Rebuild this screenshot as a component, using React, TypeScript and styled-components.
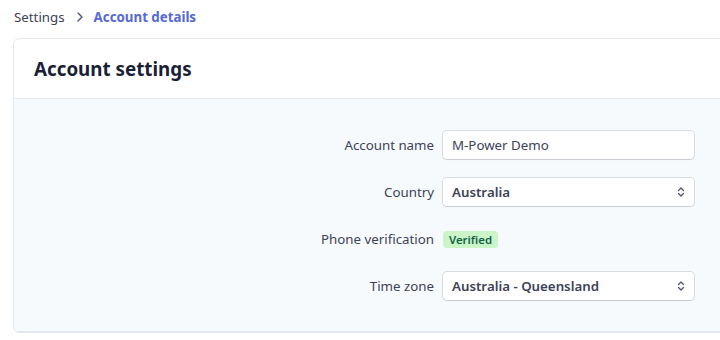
import React from "react";
import styled, { createGlobalStyle } from "styled-components";

const GlobalStyle = createGlobalStyle`
    html, body {
        margin: 0;
        padding: 0;
        background: #ffffff;
        overflow: hidden;
    }
    body {
        font-family: "Noto Sans", "Open Sans", sans-serif;
        color: #3c4257;
    }
`;

type Field = { label: string, kind: "input" | "select" | "badge", value: string };

const fields: Field[] = [
    { label: "Account name", kind: "input", value: "M-Power Demo" },
    { label: "Country", kind: "select", value: "Australia" },
    { label: "Phone verification", kind: "badge", value: "Verified" },
    { label: "Time zone", kind: "select", value: "Australia - Queensland" }
];

const Chevrons = () => (
    <svg width="12" height="12" viewBox="0 0 12 12" fill="none">
        <path d="M3.5 4.5 L6 2 L8.5 4.5" stroke="#4f566b" strokeWidth="1.3" strokeLinecap="round" strokeLinejoin="round" />
        <path d="M3.5 7.5 L6 10 L8.5 7.5" stroke="#4f566b" strokeWidth="1.3" strokeLinecap="round" strokeLinejoin="round" />
    </svg>
);

export default () => {
    return (
        <Page>
            <GlobalStyle />
            <Breadcrumbs>
                <Crumb>Settings</Crumb>
                <Separator>
                    <svg width="8" height="12" viewBox="0 0 8 12" fill="none">
                        <path d="M2 2 L6 6 L2 10" stroke="#4f566b" strokeWidth="1.4" strokeLinecap="round" strokeLinejoin="round" />
                    </svg>
                </Separator>
                <Crumb active>Account details</Crumb>
            </Breadcrumbs>
            <Card>
                <CardHeader>
                    <Title>Account settings</Title>
                </CardHeader>
                <CardBody>
                    <Form>
                        {fields.map(f => (
                            <React.Fragment key={f.label}>
                                <Label>{f.label}</Label>
                                {f.kind === "input" && <TextInput>{f.value}</TextInput>}
                                {f.kind === "select" && (
                                    <Select>
                                        <span>{f.value}</span>
                                        <Chevrons />
                                    </Select>
                                )}
                                {f.kind === "badge" && (
                                    <BadgeCell>
                                        <Badge>{f.value}</Badge>
                                    </BadgeCell>
                                )}
                            </React.Fragment>
                        ))}
                    </Form>
                </CardBody>
            </Card>
        </Page>
    );
};

const Page = styled.div`
    padding: 7px 0 0 14px;
    width: 760px;
`;

const Breadcrumbs = styled.div`
    display: flex;
    align-items: center;
    height: 20px;
    font-size: 13.3px;
    margin-bottom: 11px;
`;

const Crumb = styled.span<{ active?: boolean }>`
    color: ${p => p.active ? "#5469d4" : "#3c4257"};
    font-weight: ${p => p.active ? 700 : 400};
`;

const Separator = styled.span`
    display: flex;
    align-items: center;
    margin: 0 10px 0 11px;
`;

const Card = styled.div`
    margin-left: -1px;
    border: 1px solid #e3e8ee;
    border-radius: 6px;
    background: #ffffff;
    overflow: hidden;
`;

const CardHeader = styled.div`
    height: 59px;
    display: flex;
    align-items: center;
    padding-left: 20px;
    border-bottom: 1px solid #e3e8ee;
`;

const Title = styled.h1`
    margin: 0;
    font-size: 18.8px;
    font-weight: 700;
    color: #1a1f36;
`;

const CardBody = styled.div`
    background: #f7fafc;
    padding: 32px 0 31px;
    border-bottom: 1px solid #e3e8ee;
`;

const Form = styled.div`
    display: grid;
    grid-template-columns: 420px 251px;
    column-gap: 9px;
    row-gap: 19px;
    grid-auto-rows: 28px;
    align-items: center;
`;

const Label = styled.div`
    text-align: right;
    font-size: 13.3px;
    color: #3c4257;
`;

const TextInput = styled.div`
    box-sizing: border-box;
    height: 28px;
    display: flex;
    align-items: center;
    padding: 0 9px;
    font-size: 13.3px;
    color: #3c4257;
    background: #ffffff;
    border-radius: 4px;
    box-shadow: 0 0 0 1px rgba(60, 66, 87, 0.16), 0 1px 1px rgba(0, 0, 0, 0.08);
`;

const Select = styled(TextInput)`
    justify-content: space-between;
    font-weight: 600;
    color: #3c4257;
    padding-right: 7px;
`;

const BadgeCell = styled.div`
    display: flex;
    align-items: center;
`;

const Badge = styled.span`
    display: inline-flex;
    align-items: center;
    height: 17px;
    padding: 0 6px;
    border-radius: 4px;
    background: #cbf4c9;
    color: #0e6245;
    font-size: 11.4px;
    font-weight: 600;
`;
